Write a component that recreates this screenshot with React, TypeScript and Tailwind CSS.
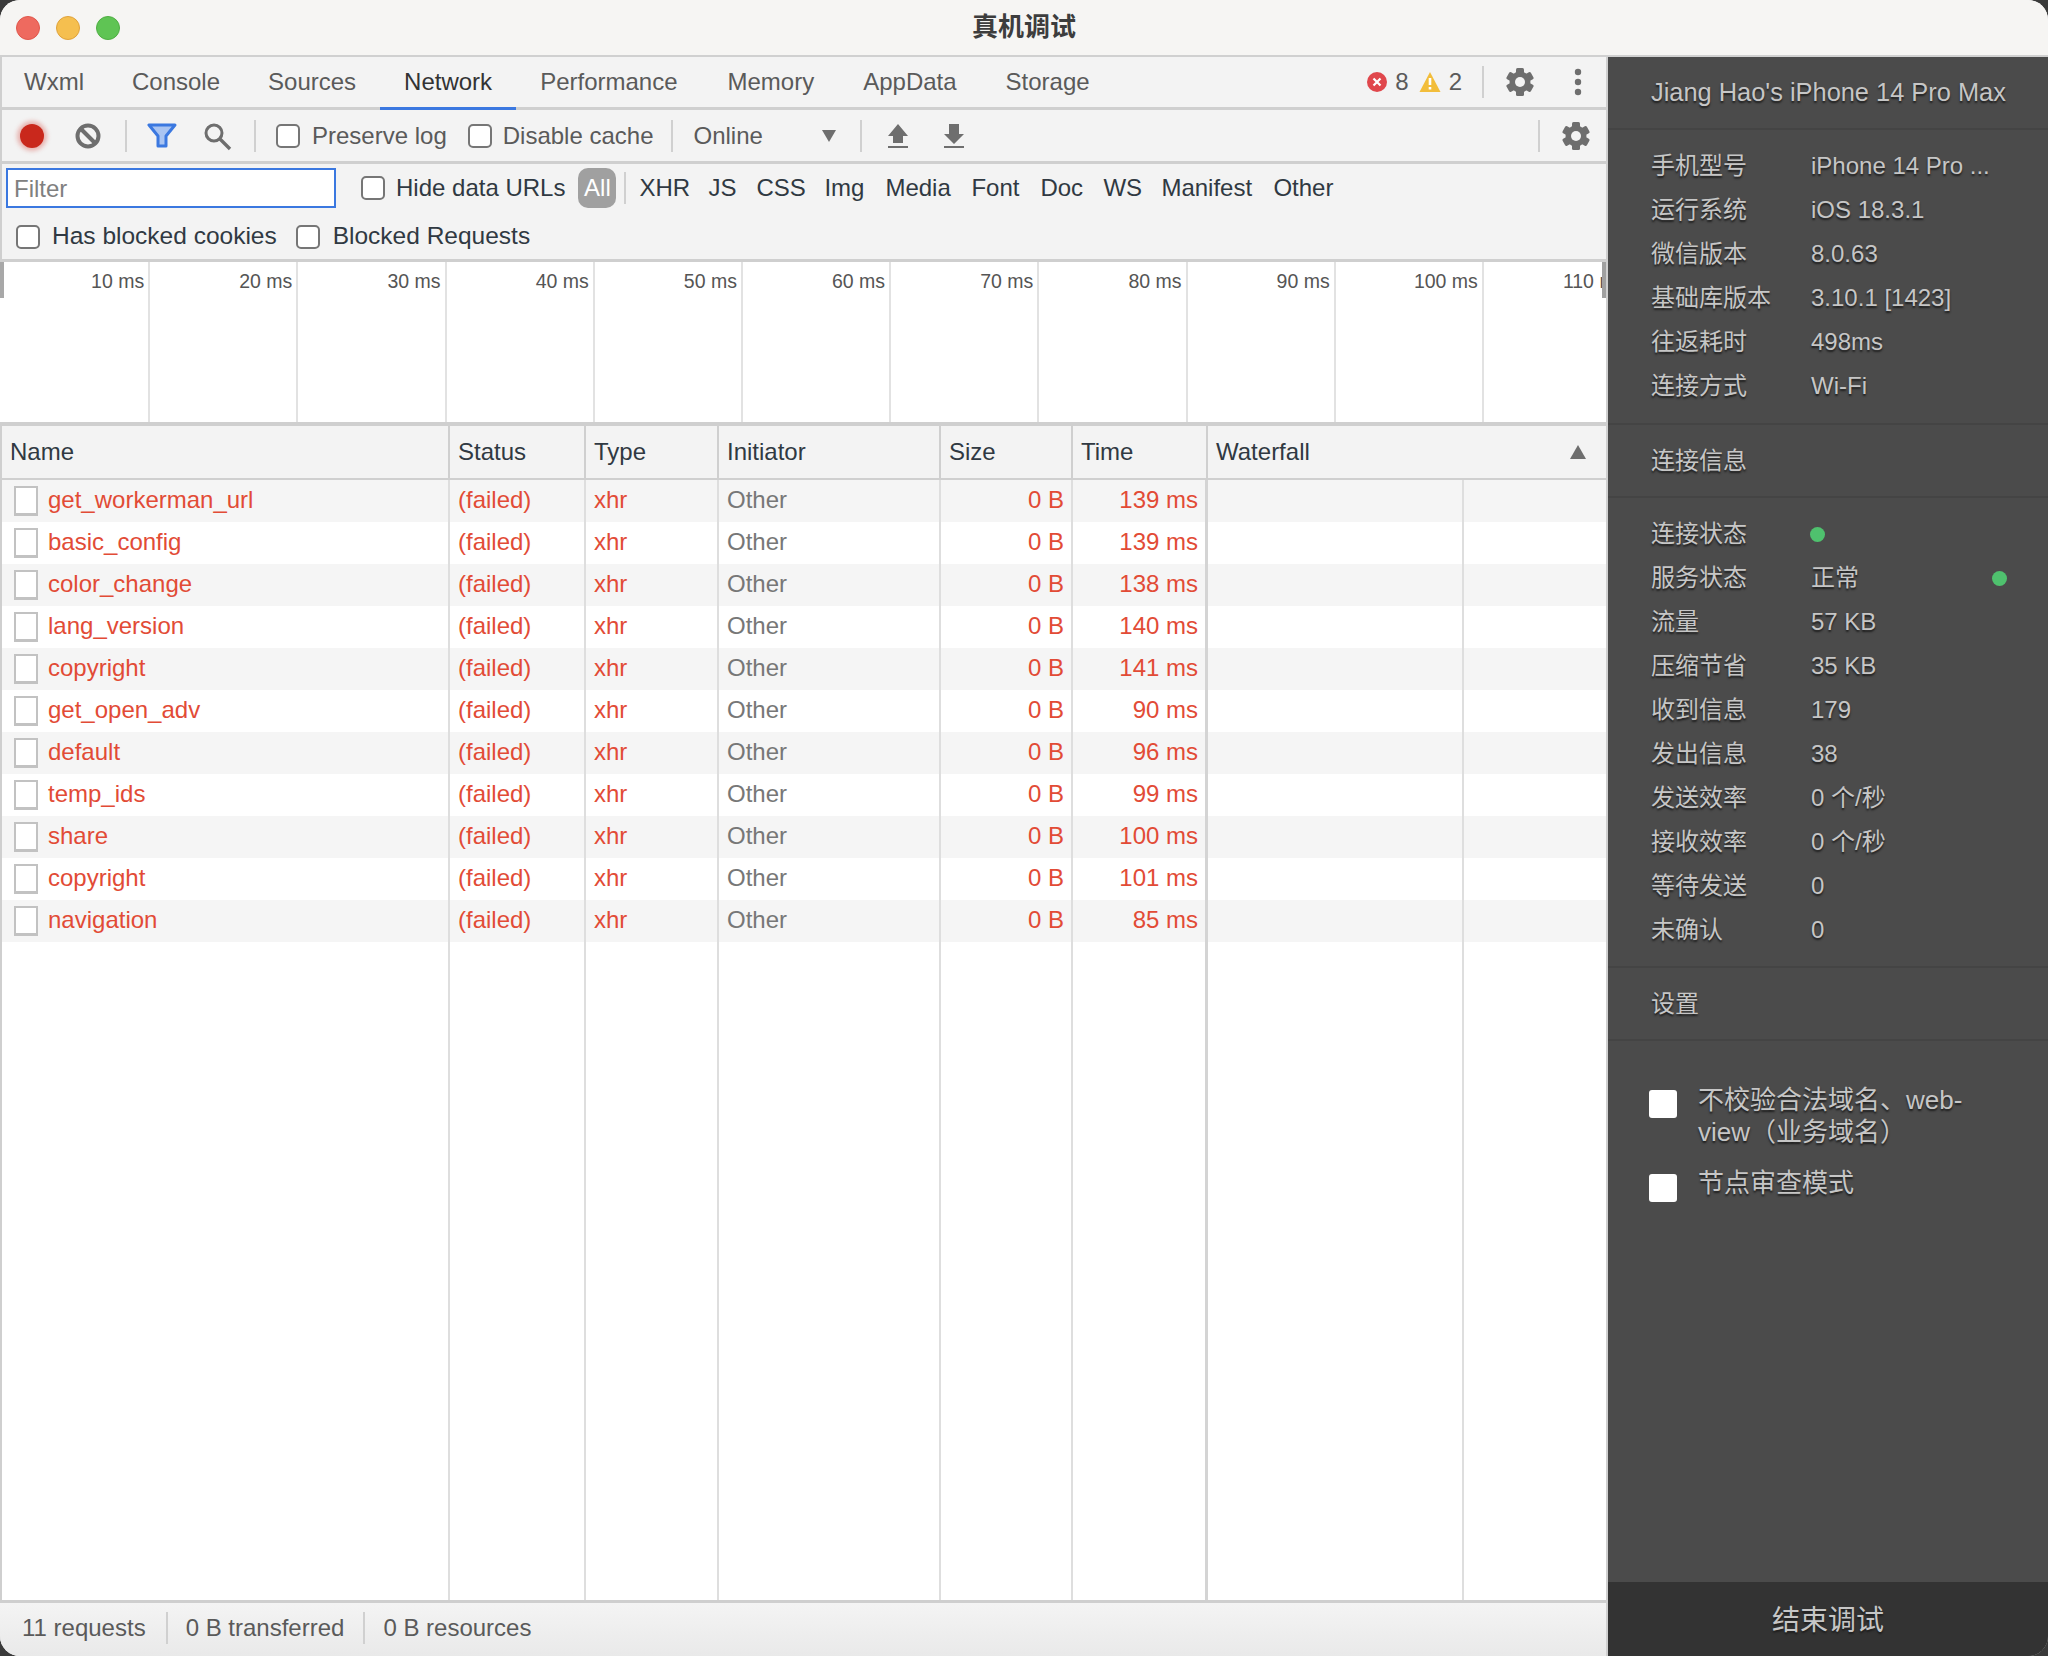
const sans = "font-['Liberation_Sans','Noto_Sans_CJK_SC',sans-serif]"

const tabs = [
  ["Wxml", "px-[24px]"],
  ["Console", "px-[24px]"],
  ["Sources", "px-[24px]"],
  ["Network", "px-[24px]"],
  ["Performance", "pl-[24px] pr-[26px]"],
  ["Memory", "pl-[24px] pr-[25px]"],
  ["AppData", "pl-[24px] pr-[25px]"],
  ["Storage", "px-[24px]"],
]
const filters = [
  ["XHR", "w-[69px]"],
  ["JS", "w-[48px]"],
  ["CSS", "w-[68px]"],
  ["Img", "w-[61px]"],
  ["Media", "w-[86px]"],
  ["Font", "w-[69px]"],
  ["Doc", "w-[63px]"],
  ["WS", "w-[58px]"],
  ["Manifest", "w-[112px]"],
  ["Other", "w-[80px]"],
]
const ticks = ["10 ms", "20 ms", "30 ms", "40 ms", "50 ms", "60 ms", "70 ms", "80 ms", "90 ms", "100 ms"]
const rows = [
  ["get_workerman_url", "139 ms"],
  ["basic_config", "139 ms"],
  ["color_change", "138 ms"],
  ["lang_version", "140 ms"],
  ["copyright", "141 ms"],
  ["get_open_adv", "90 ms"],
  ["default", "96 ms"],
  ["temp_ids", "99 ms"],
  ["share", "100 ms"],
  ["copyright", "101 ms"],
  ["navigation", "85 ms"],
]
const device = [
  ["手机型号", "iPhone 14 Pro ..."],
  ["运行系统", "iOS 18.3.1"],
  ["微信版本", "8.0.63"],
  ["基础库版本", "3.10.1 [1423]"],
  ["往返耗时", "498ms"],
  ["连接方式", "Wi-Fi"],
]
const conn = [
  ["流量", "57 KB"],
  ["压缩节省", "35 KB"],
  ["收到信息", "179"],
  ["发出信息", "38"],
  ["发送效率", "0 个/秒"],
  ["接收效率", "0 个/秒"],
  ["等待发送", "0"],
  ["未确认", "0"],
]

function Check({ className = "" }: { className?: string }) {
  return <span className={`block size-[24px] shrink-0 rounded-[5px] border-2 border-[#767676] bg-white ${className}`} />
}

function Sep({ className = "" }: { className?: string }) {
  return <span className={`block h-[32px] w-[2px] shrink-0 bg-[#d0d0d0] ${className}`} />
}

function Gear({ className = "" }: { className?: string }) {
  return (
    <svg width="30" height="30" viewBox="0 0 30 30" className={className}>
      <g fill="#6e6e6e">
        <rect x="11" y="1" width="8" height="28" rx="1.500" />
        <rect x="11" y="1" width="8" height="28" rx="1.500" transform="rotate(60 15 15)" />
        <rect x="11" y="1" width="8" height="28" rx="1.500" transform="rotate(120 15 15)" />
        <circle cx="15" cy="15" r="10.500" />
      </g>
      <circle cx="15" cy="15" r="5" fill="#f3f3f3" />
    </svg>
  )
}

function Row({ label, children }: { label: string; children: React.ReactNode }) {
  return (
    <div className="flex h-[44px] items-center">
      <span className="w-[160px] shrink-0">{label}</span>
      {children}
    </div>
  )
}

export default function App() {
  return (
    <div className={`h-[1656px] w-[2048px] overflow-hidden bg-[#3a3a3a] ${sans}`}>
      <div className="flex h-full flex-col overflow-hidden rounded-[20px] bg-[#f3f3f3]">
        {/* title bar */}
        <div className="relative flex h-[57px] shrink-0 items-center justify-center border-b-2 border-[#d0d0d0] bg-[#f6f5f3]">
          <div className="absolute left-[16px] top-[16px] flex gap-[16px]">
            <span className="size-[24px] rounded-full border border-[#e0574c] bg-[#ee6a5f]" />
            <span className="size-[24px] rounded-full border border-[#dfa23b] bg-[#f5bf4f]" />
            <span className="size-[24px] rounded-full border border-[#4fae43] bg-[#5fc454]" />
          </div>
          <span className="text-[26px] font-bold text-[#3d3d3d]">真机调试</span>
        </div>

        <div className="flex min-h-0 flex-1">
          {/* devtools */}
          <div className="flex w-[1608px] shrink-0 flex-col border-l-2 border-r-2 border-[#cfcfcf] text-[24px] leading-none">
            {/* tabs */}
            <div className="-ml-[2px] flex h-[53px] shrink-0 items-stretch border-b-[3px] border-[#cfcfcf] text-[#5a5a5a]">
              {tabs.map(([t, pad]) => (
                <span
                  key={t}
                  className={
                    t === "Network"
                      ? `-mb-[3px] flex items-center border-b-[3px] border-[#3b78e0] text-[#333333] ${pad}`
                      : `flex items-center ${pad}`
                  }
                >
                  {t}
                </span>
              ))}
              <div className="ml-auto flex items-center pr-[24px]">
                <svg width="20" height="20" viewBox="0 0 20 20" className="mr-[8px]">
                  <circle cx="10" cy="10" r="10" fill="#e0474c" />
                  <path d="M6.500 6.500l7 7M13.500 6.500l-7 7" stroke="#fff" strokeWidth="2.200" />
                </svg>
                <span>8</span>
                <svg width="22" height="20" viewBox="0 0 22 20" className="ml-[10px] mr-[8px]">
                  <path d="M11 0L21.500 20H.5z" fill="#f2bd3a" />
                  <path d="M11 6v7M11 15v2.500" stroke="#fff" strokeWidth="2.600" />
                </svg>
                <span>2</span>
                <Sep className="ml-[20px] mr-[21px]" />
                <Gear />
                <svg width="8" height="30" viewBox="0 0 8 30" className="ml-[39px]">
                  <circle cx="4" cy="5" r="3.200" fill="#6e6e6e" />
                  <circle cx="4" cy="15" r="3.200" fill="#6e6e6e" />
                  <circle cx="4" cy="25" r="3.200" fill="#6e6e6e" />
                </svg>
              </div>
            </div>

            {/* toolbar */}
            <div className="-ml-[2px] flex h-[54px] shrink-0 items-center border-b-[3px] border-[#cfcfcf] text-[#5a5a5a]">
              <span className="ml-[20px] size-[24px] rounded-full bg-[#c9281c] shadow-[0_0_4px_3px_rgba(210,60,50,0.35)]" />
              <svg width="28" height="28" viewBox="0 0 28 28" className="ml-[30px]">
                <circle cx="14" cy="14" r="10.500" fill="none" stroke="#6e6e6e" strokeWidth="4" />
                <path d="M6.500 6.500l15 15" stroke="#6e6e6e" strokeWidth="4" />
              </svg>
              <Sep className="ml-[23px]" />
              <svg width="30" height="26" viewBox="0 0 30 26" className="ml-[20px]">
                <path d="M2 2h26L19 13v10h-8V13z" fill="#a9c4f2" stroke="#3b78e0" strokeWidth="3" strokeLinejoin="round" />
              </svg>
              <svg width="30" height="30" viewBox="0 0 30 30" className="ml-[25px]">
                <circle cx="12" cy="12" r="8" fill="none" stroke="#6e6e6e" strokeWidth="3" />
                <path d="M18 18l10 10" stroke="#6e6e6e" strokeWidth="3.400" />
              </svg>
              <Sep className="ml-[22px]" />
              <Check className="ml-[20px]" />
              <span className="ml-[12px]">Preserve log</span>
              <Check className="ml-[21px]" />
              <span className="ml-[11px]">Disable cache</span>
              <Sep className="ml-[18px]" />
              <span className="ml-[20px]">Online</span>
              <svg width="14" height="12" viewBox="0 0 14 12" className="ml-[59px]">
                <path d="M0 0h14L7 12z" fill="#6e6e6e" />
              </svg>
              <Sep className="ml-[24px]" />
              <svg width="20" height="24" viewBox="0 0 20 24" className="ml-[26px]">
                <path d="M10 0L20 12h-5v7H5v-7H0zM0 22h20v2H0z" fill="#6e6e6e" />
              </svg>
              <svg width="20" height="24" viewBox="0 0 20 24" className="ml-[36px]">
                <path d="M5 0h10v10h5L10 20 0 10h5zM0 22h20v2H0z" fill="#6e6e6e" />
              </svg>
              <Sep className="ml-auto" />
              <Gear className="ml-[21px] mr-[15px]" />
            </div>

            {/* filter bar */}
            <div className="-ml-[2px] flex h-[98px] shrink-0 flex-col border-b-[3px] border-[#cfcfcf] text-[#303942]">
              <div className="flex h-[47px] shrink-0 items-center">
                <div className="ml-[6px] flex h-[40px] w-[330px] items-center border-2 border-[#3b78e0] bg-white px-[6px] pt-[3px] text-[#808080]">
                  Filter
                </div>
                <Check className="ml-[25px]" />
                <span className="ml-[11px]">Hide data URLs</span>
                <span className="ml-[13px] flex h-[40px] w-[38px] items-center justify-center rounded-[10px] bg-[#a0a0a0] text-white">
                  All
                </span>
                <Sep className="ml-[8px]" />
                <div className="ml-[13px] flex">
                  {filters.map(([f, w]) => (
                    <span key={f} className={w}>
                      {f}
                    </span>
                  ))}
                </div>
              </div>
              <div className="flex flex-1 items-center pt-[3px] text-[24.500px]">
                <Check className="ml-[16px]" />
                <span className="ml-[12px]">Has blocked cookies</span>
                <Check className="ml-[19px]" />
                <span className="ml-[13px]">Blocked Requests</span>
              </div>
            </div>

            {/* timeline */}
            <div className="relative -ml-[2px] flex h-[164px] shrink-0 border-b-[4px] border-[#cfcfcf] bg-white pl-[2px] text-[19.500px] text-[#555555]">
              <span className="absolute left-0 top-0 h-[36px] w-[4px] bg-[#a8a8a8]" />
              {ticks.map((t) => (
                <div key={t} className="h-full w-[148.200px] shrink-0 border-r-2 border-[#e2e2e2] pr-[4px] pt-[10px] text-right">
                  {t}
                </div>
              ))}
              <div className="flex-1 overflow-hidden whitespace-nowrap pl-[79px] pt-[10px]">110 ms</div>
              <span className="absolute right-0 top-0 h-[36px] w-[4px] bg-[#a0a0a0]" />
            </div>

            {/* table */}
            <div className="flex h-[54px] shrink-0 items-center border-b-2 border-[#cfcfcf] text-[#303942]">
              <div className="flex h-full w-[448px] items-center border-r-2 border-[#cfcfcf] pl-[8px]">Name</div>
              <div className="flex h-full w-[136px] items-center border-r-2 border-[#cfcfcf] pl-[8px]">Status</div>
              <div className="flex h-full w-[133px] items-center border-r-2 border-[#cfcfcf] pl-[8px]">Type</div>
              <div className="flex h-full w-[222px] items-center border-r-2 border-[#cfcfcf] pl-[8px]">Initiator</div>
              <div className="flex h-full w-[132px] items-center border-r-2 border-[#cfcfcf] pl-[8px]">Size</div>
              <div className="flex h-full w-[135px] items-center border-r-2 border-[#cfcfcf] pl-[8px]">Time</div>
              <div className="flex h-full flex-1 items-center justify-between pl-[8px] pr-[20px]">
                Waterfall
                <svg width="16" height="14" viewBox="0 0 16 14">
                  <path d="M8 0l8 14H0z" fill="#6e6e6e" />
                </svg>
              </div>
            </div>
            <div className="relative min-h-0 flex-1 bg-white">
              <div className="text-[#e24b36]">
                {rows.map(([name, time], i) => (
                  <div key={i} className={`flex h-[42px] items-center pb-[2px] ${i % 2 === 0 ? "bg-[#f5f5f5]" : ""}`}>
                    <div className="flex w-[448px] items-center pl-[12px]">
                      <span className="mt-[2px] block h-[30px] w-[24px] border-2 border-b-[3px] border-[#c2c2c2] bg-white" />
                      <span className="ml-[10px]">{name}</span>
                    </div>
                    <div className="w-[136px] pl-[8px]">(failed)</div>
                    <div className="w-[133px] pl-[8px]">xhr</div>
                    <div className="w-[222px] pl-[8px] text-[#777777]">Other</div>
                    <div className="w-[132px] pr-[9px] text-right">0 B</div>
                    <div className="w-[135px] pr-[10px] text-right">{time}</div>
                  </div>
                ))}
              </div>
              <div className="absolute inset-0 flex">
                <div className="w-[448px] border-r-2 border-[#dedede]" />
                <div className="w-[136px] border-r-2 border-[#dedede]" />
                <div className="w-[133px] border-r-2 border-[#dedede]" />
                <div className="w-[222px] border-r-2 border-[#dedede]" />
                <div className="w-[132px] border-r-2 border-[#dedede]" />
                <div className="w-[135px] border-r-[3px] border-[#d4d4d4]" />
                <div className="w-[256px] border-r-2 border-[#dedede]" />
              </div>
            </div>

            {/* status bar */}
            <div className="-ml-[2px] flex h-[56px] shrink-0 items-center border-t-[3px] border-[#cfcfcf] bg-gradient-to-b from-[#f4f4f4] to-[#e9e9e9] pb-[3px] text-[#5a5a5a]">
              <span className="ml-[22px]">11 requests</span>
              <Sep className="ml-[20px]" />
              <span className="ml-[18px]">0 B transferred</span>
              <Sep className="ml-[19px]" />
              <span className="ml-[18px]">0 B resources</span>
            </div>
          </div>

          {/* device panel */}
          <div className="flex min-w-0 flex-1 flex-col bg-[#4b4b4b] text-[24px] leading-none text-[#c6c6c6] [text-shadow:0_2px_2px_#1d1d1d]">
            <div className="flex h-[73px] shrink-0 items-center border-b-2 border-[#444444] pl-[43px] text-[25.400px]">
              Jiang Hao's iPhone 14 Pro Max
            </div>
            <div className="shrink-0 border-b-2 border-[#444444] pb-[15px] pl-[43px] pt-[14px]">
              {device.map(([k, v]) => (
                <Row key={k} label={k}>
                  <span>{v}</span>
                </Row>
              ))}
            </div>
            <div className="flex h-[73px] shrink-0 items-center border-b-2 border-[#444444] pl-[43px]">连接信息</div>
            <div className="shrink-0 border-b-2 border-[#444444] pb-[14px] pl-[43px] pt-[14px]">
              <Row label="连接状态">
                <span className="ml-[-1px] size-[15px] rounded-full bg-[#4fc16e]" />
              </Row>
              <Row label="服务状态">
                <span>正常</span>
                <span className="ml-[133px] size-[15px] rounded-full bg-[#4fc16e]" />
              </Row>
              {conn.map(([k, v]) => (
                <Row key={k} label={k}>
                  <span>{v}</span>
                </Row>
              ))}
            </div>
            <div className="flex h-[73px] shrink-0 items-center border-b-2 border-[#444444] pl-[43px]">设置</div>
            <div className="min-h-0 flex-1 pl-[41px] pt-[43px] text-[26px] leading-[32px]">
              <div className="flex items-start">
                <span className="mt-[6px] block size-[28px] shrink-0 rounded-[3px] bg-white" />
                <span className="ml-[21px] w-[300px]">不校验合法域名、web-view（业务域名）</span>
              </div>
              <div className="mt-[19px] flex items-start">
                <span className="mt-[7px] block size-[28px] shrink-0 rounded-[3px] bg-white" />
                <span className="ml-[21px]">节点审查模式</span>
              </div>
            </div>
            <div className="flex h-[74px] shrink-0 items-center justify-center bg-[#333333] pt-[4px] text-[28px]">结束调试</div>
          </div>
        </div>
      </div>
    </div>
  )
}
